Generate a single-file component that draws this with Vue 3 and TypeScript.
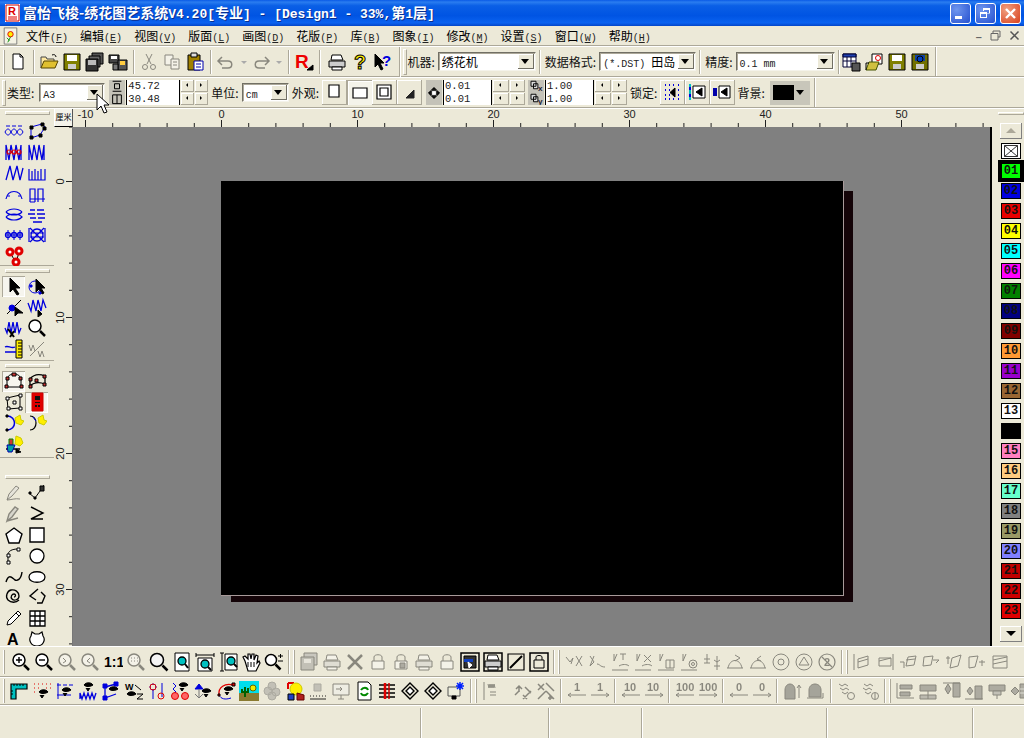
<template>
  <div class="app">
    <div class="titlebar">
      <svg class="logo" width="15" height="18" viewBox="0 0 15 18">
        <path d="M0 0h15v18H0z" fill="#fff" />
        <path d="M1 1h13v16H1z" fill="none" stroke="#c00" />
        <text x="3" y="11" font-size="11" font-weight="bold" fill="#d00" font-family="Liberation Sans">R</text>
        <path d="M3 13h9M3 15h9" stroke="#d00" />
      </svg>
      <span class="title">富怡飞梭-绣花图艺系统<span class="m">V4.20[</span>专业<span class="m">] - [Design1 - 33%,</span>第<span class="m">1</span>层<span class="m">]</span></span>
      <div class="winbtns">
        <div class="winbtn"><i class="min"></i></div>
        <div class="winbtn"><i class="max"></i><i class="max back"></i></div>
        <div class="winbtn close">
          <svg width="13" height="13" viewBox="0 0 13 13"><path d="M2 2l9 9M11 2l-9 9" stroke="#fff" stroke-width="2.4" /></svg>
        </div>
      </div>
    </div>

    <div class="menubar">
      <Ico class="mdi-icon" name="mdi" />
      <span v-for="m in menus" :key="m[0]" class="menu-item">{{ m[0] }}<span class="lat">(<u>{{ m[1] }}</u>)</span></span>
      <div class="mdi-btns">
        <span>&#8211;</span>
        <svg width="11" height="11" viewBox="0 0 11 11"><path d="M3 3V1h7v6H8M1 3.500h7v6.500H1z" fill="none" stroke="#666" /></svg>
        <svg width="11" height="11" viewBox="0 0 11 11"><path d="M1.500 1.500l8 8M9.500 1.500l-8 8" stroke="#555" stroke-width="1.500" /></svg>
      </div>
    </div>

    <div class="toolrow row1">
      <div class="bar">
        <div v-for="(it, i) in parse('= new | open save saveall saveas | !cut !copy paste | !undo ~ !redo ~ | rlogo | _2 print what help')" :key="i" :class="it.cls"><Ico v-if="it.name" :name="it.name" /></div>
        <div class="endline"></div>
        <div class="grip"></div>
        <span class="lbl">机器:</span>
        <div class="combo w98"><span class="combo-text cjk">绣花机</span><b class="arrow"></b></div>
        <div class="sep"></div>
        <span class="lbl">数据格式:</span>
        <div class="combo w97"><span class="combo-text"><span class="lat">(*.DST) </span>田岛</span><b class="arrow"></b></div>
        <div class="sep"></div>
        <span class="lbl">精度:</span>
        <div class="combo w99"><span class="combo-text"><span class="lat">0.1 mm</span></span><b class="arrow"></b></div>
        <div class="sep tight"></div>
        <div v-for="(it, i) in parse('tb1 tb2 floppy floppy2')" :key="'e' + i" :class="it.cls"><Ico v-if="it.name" :name="it.name" /></div>
      </div>
    </div>

    <div class="toolrow row2">
      <div class="bar">
        <div class="grip"></div>
        <span class="lbl">类型:</span>
        <div class="combo w66"><span class="combo-text"><span class="lat">A3</span></span><b class="arrow"></b></div>
        <div class="gray-ico"><Ico name="szH" /><Ico name="szW" /></div>
        <div class="pair w54"><span>45.72</span><span>30.48</span></div>
        <div class="spins"><i v-for="n in spinArrows" :key="n" :class="n"></i></div>
        <span class="lbl">单位:</span>
        <div class="combo w47"><span class="combo-text"><span class="lat">cm</span></span><b class="arrow"></b></div>
        <span class="lbl look">外观:</span>
        <div v-for="b in looks" :key="b" class="bigbtn" :class="{ pressed: b === 'lk2' }"><Ico :name="b" /></div>
        <div class="gray-ico one"><Ico name="move" /></div>
        <div class="pair w50"><span>0.01</span><span>0.01</span></div>
        <div class="spins w34"><i v-for="n in spinArrows" :key="n" :class="n"></i></div>
        <div class="gray-ico qq"><Ico name="qx" /><Ico name="qy" /></div>
        <div class="pair w50"><span>1.00</span><span>1.00</span></div>
        <div class="spins w34"><i v-for="n in spinArrows" :key="n" :class="n"></i></div>
        <span class="lbl">锁定:</span>
        <div v-for="b in locks" :key="b" class="bigbtn"><Ico :name="b" /></div>
        <span class="lbl bg">背景:</span>
        <div class="bgpick"><i></i><b class="arrow"></b></div>
      </div>
    </div>

    <div class="work">
      <div class="leftbar">
        <div class="lgroup g1">
          <div class="hgrip"></div>
          <div class="lgrid">
            <div v-for="(it, i) in parse('l1 l2 l3 l4 l5 l6 l7 l8 l9 l10 l11 l12 l13')" :key="i" :class="it.cls"><Ico :name="it.name" /></div>
          </div>
        </div>
        <div class="lgroup g2">
          <div class="hgrip"></div>
          <div class="lgrid">
            <div v-for="(it, i) in parse('arrow nodepick cutn zzsel zzeye mag rulery !wave')" :key="i" :class="[it.cls, { lit: it.name === 'arrow' }]"><Ico :name="it.name" /></div>
          </div>
        </div>
        <div class="lgroup g3">
          <div class="hgrip"></div>
          <div class="lgrid">
            <div v-for="(it, i) in parse('shape1 shape2 shape3 reddoc cy1 cy2 person')" :key="i" :class="[it.cls, { lit: it.name === 'shape1' || it.name === 'reddoc' }]"><Ico :name="it.name" /></div>
          </div>
        </div>
        <div class="lgroup g4">
          <div class="hgrip"></div>
          <div class="lgrid">
            <div v-for="(it, i) in parse('!pen pen2 !pen3 zz2 penta square arcn circle curve oval spiral poly pencil grid letterA blob')" :key="i" :class="it.cls"><Ico :name="it.name" /></div>
          </div>
        </div>
      </div>

      <div class="center">
        <div class="ruler-row">
          <div class="corner">厘米</div>
          <svg class="hruler" width="917" height="19">
            <path v-for="t in hTicks" :key="t.v" :d="`M${t.x} ${t.major ? 12 : 15}V19`" stroke="#222" />
            <text v-for="t in hLabels" :key="t.v" :x="t.x" y="10" text-anchor="middle" font-size="11" fill="#222" font-family="Liberation Sans">{{ t.v }}</text>
          </svg>
        </div>
        <div class="canvas-row">
          <svg class="vruler" width="19" height="520">
            <path v-for="t in vTicks" :key="t.v" :d="`M${t.major ? 12 : 15} ${t.y}H19`" stroke="#222" />
            <text v-for="t in vLabels" :key="t.v" :transform="`translate(10 ${t.y}) rotate(-90)`" text-anchor="middle" font-size="11" fill="#222" font-family="Liberation Sans">{{ t.v }}</text>
          </svg>
          <div class="canvas">
            <div class="sheet-shadow"></div>
            <div class="sheet"></div>
          </div>
        </div>
      </div>

      <div class="palette">
        <div class="hgrip"></div>
        <div class="scrollbtn"><b class="up"></b></div>
        <div class="swatch none">
          <svg width="14" height="12" viewBox="0 0 14 12"><path d="M.5.500h13v11H.500zM.5.500l13 11M13.500.500l-13 11" fill="none" stroke="#333" /></svg>
        </div>
        <div v-for="s in swatches" :key="s.n" class="swatch" :class="{ on: s.n === '01' }" :style="{ background: s.c }">{{ s.n === '14' ? '' : s.n }}</div>
        <div class="scrollbtn down"><b></b></div>
      </div>
    </div>

    <div class="toolrow bottom1">
      <div v-for="(it, i) in parse('= zin zout !zprev !znext one !zdot zall zpage zw zh hand zpm = !b1 !print !xx !padlock !padlock2 !print !padlock dot1 dot2 dot3 dot4 = !n1 !n2 !n3 !n4 !n5 !n6 !n7 !n8 !n9 !n10 !n11 !n12 = !k1 !k2 !k3 !k4 !k5 !k6 !k7')" :key="i" :class="it.cls"><Ico v-if="it.name" :name="it.name" /></div>
    </div>

    <div class="toolrow bottom2">
      <div v-for="(it, i) in parse('= sq eye1 eye2 eye3 eye4 eye5 pin eye6 eye7 eye8 terrain !blobs bulb !dots !monitor docg bars dia dia spark = !w1 _ !w2 !w3 | !m1 !m2 | !m3 !m4 | !m5 !m6 | !m7 !m8 | !bell1 !bell2 | !hat1 !hat2 = !al1 !al2 !al3 !al4 !al5 !al6')" :key="i" :class="it.cls"><Ico v-if="it.name" :name="it.name" /></div>
    </div>

    <div class="statusbar">
      <div v-for="w in statusWidths" :key="w" class="panel" :style="{ width: w + 'px' }"></div>
    </div>

    <svg class="cursor" width="14" height="22" viewBox="0 0 14 22">
      <path d="M1 1v16l4-4 3 7 3-1-3-7h5z" fill="#fff" stroke="#000" />
    </svg>
  </div>
</template>

<script setup lang="ts">
import { h } from "vue";

type Spec = { d?: string; s?: string; f?: string; w?: number; t?: string; x?: number; y?: number; z?: number };

const B = "#0000dd";
const K = "#000";
const R = "#e00000";
const Y = "#ffee00";
const G = "#777";
const T = "#00c0c0";

const p = (d: string, s: string = K, f?: string, w?: number): Spec => ({ d, s, f, w });
const txt = (t: string, x: number, y: number, z: number, f: string = K, s?: string): Spec => ({ t, x, y, z, f, s });
const c = (x: number, y: number, r: number) =>
  `M${x - r} ${y}a${r} ${r} 0 1 0 ${2 * r} 0a${r} ${r} 0 1 0 ${-2 * r} 0`;
const eye = (x: number, y: number) => p(`M${x} ${y}c2-3 7-3 9 0-3 2-7 2-9 0z`, K, K);
const lens = (x: number, y: number, r: number, f = "#fff") => [
  p(c(x, y, r), K, f, 1.5),
  p(`M${x + r - 1} ${y + r - 1}l5 5`, K, undefined, 2.5),
];
const floppy = (f: string, w = "#fff") => [
  p("M2 2h16v16H2z", K, f),
  p("M5 3h10v6H5z", "none", w),
  p("M6 12h8v5H6z", "none", "#ccc"),
];
const padlock = [p("M4 9h12v8H4z", K, "#fff"), p("M6 9V5c0-3 8-3 8 0v4")];
const prn = [p("M5 3h9l2 5H4z", K, "#fff"), p("M2 9h16v6H2z", K, "#ccc"), p("M5 15h10v3H5z", K, "#fff")];
const needle = (a: string) => [p("M4 2v7M7 2L4 9M2 18h16"), p(a)];

const I: Record<string, Spec[]> = {
  mdi: [p("M3 1h14v18H3z", G, "#f4f2e4"), p(c(10, 8, 3), R, Y), p("M10 11l-3 6M6 12l3 3", "#080")],
  new: [p("M5 2h7l3 3v12H5z", K, "#fff"), p("M12 2v3h3")],
  open: [p("M2 16V5h5l1 2h7v2", "#444", "#ffe9a0"), p("M2 16l3-7h14l-3 7z", "#554400", "#e0c030"), p("M13 3c2-1 4 0 4 2", K)],
  save: floppy("#808000"),
  saveall: [p("M7 1h11v11H7z", K, "#555"), p("M4 4h11v11H4z", K, "#666"), p("M1 7h12v12H1z", K, "#333"), p("M3 8h8v5H3z", "none", "#bbb")],
  saveas: [p("M1 3h10v8H1z", K, "#444"), p("M3 4h6v3H3z", "none", "#fff"), p("M10 8h9v10h-9z", K, "#555"), p("M12 9h5v4h-5z", "none", "#ffcc40"), p("M5 12h5v6H5z", K, "#777")],
  cut: [p("M7 2l5 10M13 2L8 12"), p(c(6, 15, 2.5)), p(c(14, 15, 2.5))],
  copy: [p("M3 3h8v10H3z", K, "#fff"), p("M9 7h8v10H9z", K, "#fff"), p("M11 10h4M11 13h4")],
  paste: [p("M3 3h12v15H3z", K, "#a08000"), p("M6 1h6v4H6z", K, "#ddd"), p("M9 9h9v9H9z", "#0000aa", "#fff"), p("M11 12h5M11 15h5", "#0000aa")],
  undo: [p("M6 5L2 9l4 4M2 9h10c5 0 5 7 0 7H6", K, undefined, 1.5)],
  redo: [p("M14 5l4 4-4 4M18 9H8c-5 0-5 7 0 7h6", K, undefined, 1.5)],
  rlogo: [txt("R", 1, 16, 19, "#ee0000"), p("M13 18h6v-5z", K, K)],
  print: prn,
  what: [txt("?", 4, 17, 20, Y, K)],
  help: [p("M2 2v13l3-3 3 6 2-1-3-6h4z", K, K), txt("?", 9, 14, 15, B)],
  tb1: [p("M2 2h13v13H2z", "#003", "#fff"), p("M2 2h13v3H2z", "#003", "#2040b0"), p("M6 5v10M10 5v10M2 9h13", "#003"), p("M11 11h8v8h-8z", K, "#555")],
  tb2: [p("M8 2h10v10H8z", K, "#fff"), p(c(14, 6, 2.5), R, "#fff"), p("M2 18l3-8h10l-3 8z", "#450", "#d0c040"), p("M2 18v-7h3", K)],
  floppy: floppy("#808000"),
  floppy2: [...floppy("#707000", "#1040a0"), p(c(10, 7, 3), K, "#0040c0")],
  szH: [p("M3 2h14M3 18h14", K, undefined, 1.6), p("M6 6h8v8H6z", K, undefined, 1.6)],
  szW: [p("M3 3h14v14H3zM10 3v14", K, undefined, 1.6)],
  lk1: [p("M5 3h10v12H5z", K, "#fff", 1.2)],
  lk2: [p("M3 5h14v10H3z", K, "#fff", 1.2)],
  lk3: [p("M3 3h14v14H3z", K, "#fff", 1.2), p("M6 6h8v8H6z", K, "none", 1.2)],
  lk4: [p("M15 8v8H7z", "#222", "#222")],
  move: [p("M10 3l3 3H7zM10 17l3-3H7zM3 10l3-3v6zM17 10l-3-3v6z", K, K), p("M7 7h6v6H7z", K, "#fff")],
  qx: [p("M2 2h8v8H2zM6 6h7v8H6z", K, "#ddd", 1.5), txt("x", 13, 17, 13, "#223")],
  qy: [p("M2 2h8v8H2zM6 6h7v8H6z", K, "#ddd", 1.5), txt("y", 13, 17, 13, "#223")],
  lock1: [p("M3 3h1M7 3h1M11 3h1M16 3h1M3 8h1M7 8h1M16 8h1M3 13h1M7 13h1M16 13h1M3 17h1M7 17h1M11 17h1M16 17h1", B, undefined, 2), p("M13 6v9l-5-4.500z", K, K)],
  lock2: [p("M3 2v16", T, undefined, 2), p("M3 5v3M3 12v3", B, undefined, 2), p("M6 4h12v12H6z", K, "#fff"), p("M15 6v8l-6-4z", K, K)],
  lock3: [p("M3 6v8", "#0000aa", undefined, 4), p("M7 4h11v12H7z", K, "#fff"), p("M15 6v8l-6-4z", K, K)],

  l1: [p("M2 5h4M8 5h4M14 5h4", B), p("M1 11c2-4 4-4 6 0s4 4 6 0 4-4 6 0M1 11c2 4 4 4 6 0s4-4 6 0 4 4 6 0", B)],
  l2: [p("M4 6l11-3 3 3-5 8-9 3z", B, undefined, 1), p("M3 5h3v3H3zM14 2h3v3h-3zM16 6h3v3h-3zM12 13h3v3h-3zM3 15h3v3H3z", K, K)],
  l3: [p("M2 18V3l3 15 2-15 3 15 2-15 3 15 2-15v15", B, undefined, 1.3), p(c(5, 10, 2) + c(10, 10, 2) + c(15, 10, 2), R, undefined, 1.2)],
  l4: [p("M2 18V3l3 15 2-15 3 15 2-15 3 15 2-15v15", B, undefined, 1.3)],
  l5: [p("M2 17L6 3l3 14 4-14 3 14 3-12", B, undefined, 1.3)],
  l6: [p("M2 6v11h16V6M5 8v9M8 6v11M11 8v9M14 6v11", B, undefined, 1.2)],
  l7: [p("M2 15c2-10 14-10 16 0", B, undefined, 1.2), p("M3 12h3M14 12h3", B)],
  l8: [p("M3 18V5h5v13M3 18h5M11 18V5h5v13M3 15h15", B, undefined, 1.2)],
  l9: [p("M2 7c4-4 12-4 16 0M2 12c4-4 12-4 16 0 -4 4-12 4-16 0M2 7c4 4 12 4 16 0", B, undefined, 1.2)],
  l10: [p("M3 5h5M10 5h7M1 9h7M10 9h8M3 13h6M11 13h7M6 17h9", B, undefined, 1.3)],
  l11: [p(c(4, 10, 2.5) + c(10, 10, 2.5) + c(16, 10, 2.5), B, undefined, 1.3), p("M1 10h18M4 5v10M10 5v10M16 5v10", B)],
  l12: [p(c(10, 10, 6), B, undefined, 1.3), p("M3 3l14 14M17 3L3 17M3 8h14M3 12h14M2 3v14M18 3v14", B, undefined, 1.2)],
  l13: [p("M7 8l5 9M15 6l-3 11", K), p(c(6, 6, 3) + c(15, 5, 3) + c(12, 16, 3), R, "#fff", 3)],

  arrow: [p("M6 2v14l3-3 4 6 2-1-4-6h5z", K, K)],
  nodepick: [p(c(8, 11, 6), B, undefined, 1), p("M9 3v13l3-3 3 5 2-1-3-5h4z", K, K), p("M3 9h2v2H3zM12 16h2v2h-2z", B, B)],
  cutn: [p("M3 17L17 3", K), p(c(8, 11, 3), B, B), p("M11 10v9l3-3h5z", K, K)],
  zzsel: [p("M1 6l3 8 2-11 3 11 2-11 3 11 2-11 3 8", B, undefined, 1.3), p("M11 13v7l4-3z", K, K)],
  zzeye: [p("M1 10l2 5 2-11 2 11 2-11 2 11 2-11 2 11 2-5", B, undefined, 1.3), p("M4 11l6 8", K, undefined, 2), p("M10 13l-4 6", K, undefined, 2)],
  mag: lens(8, 8, 6),
  rulery: [p("M12 1h6v18h-6z", K, Y), p("M14 4h4M14 7h4M14 10h4M14 13h4M14 16h4"), p("M1 8c3-2 6 2 10 0M1 13h11", B, undefined, 1.3)],
  wave: [p("M2 6l2 6 2-6 2 6M11 12l2 6 2-6 2 6M3 17L17 3", K)],
  shape1: [p("M3 16V9c0-8 14-8 14 0v7z", K), p("M1 14h3v3H1zM16 14h3v3h-3zM8 2h4v3H8zM2 6h3v3H2zM15 6h3v3h-3z", K, "#c33")],
  shape2: [p("M3 8c4-5 10-5 15-3M3 15c4-4 10-4 15-2M3 8v7M18 5v8", K, undefined, 1.3), p("M2 7h3v3H2zM16 4h3v3h-3zM8 8h3v3H8zM2 14h3v3H2zM16 12h3v3h-3z", K, "#c33")],
  shape3: [p("M3 6l13-3v13l-12 1z", K), p("M2 5h3v3H2zM15 2h3v3h-3zM15 15h3v3h-3zM3 15h3v3H3zM9 9h3v3H9z", K, "#fff")],
  reddoc: [p("M5 1h11v18H5z", "#c00", "#e00000"), p("M8 4h5v4H8zM8 10h5v1H8zM8 13h2v2H8zM11 13h2v2h-2z", "none", "#111")],
  cy1: [p("M3 3c10 0 10 14 0 14", B, undefined, 1.5), p("M11 5l5-3 1 5 3 1-3 4-5-2z", "#cc0", Y), p("M2 2h2v2H2zM2 16h2v2H2z", K, K)],
  cy2: [p("M3 3c8 0 8 14 0 14", K, undefined, 1.2), p("M11 5l5-3 1 5 3 1-3 4-5-2z", "#cc0", Y), p("M6 4l3 4", B)],
  person: [p("M12 2l5 2 2 5-3 3-5-2z", "#cc0", Y), p("M2 15h14", K, undefined, 1.5), p("M5 5h4v6H5z", "#080", "#c33"), p("M3 11h8l-3 7H4z", "#00a", "#00a0a0"), p("M12 15l5 3-5 1z", K, K)],

  pen: [p("M3 17l2-6 7-8 3 2-7 8zM3 17c4 0 8-2 13-1", K, "#ddd")],
  pen2: [p("M2 10l6 5 5-7M13 8l4-6", K), p("M13 3h4v5h-4z", K, "#333"), p("M2 9h2v2H2zM7 14h2v2H7z", K, K)],
  pen3: [p("M3 17l2-7 6-7 3 2-6 8zM3 17l11-3", K, "#bbb", 1.4)],
  zz2: [p("M4 3l12 6L4 15h12", K, undefined, 1.4)],
  penta: [p("M10 3l8 6-3 9H5L2 9z", K, "#fff", 1.4)],
  square: [p("M3 3h14v14H3z", K, "#fff", 1.4)],
  arcn: [p("M4 16V9c0-4 4-6 10-6", K), p("M3 15h3v3H3zM3 8h3v3H3zM13 2h3v3h-3z", K, "#fff")],
  circle: [p(c(10, 10, 7), K, "#fff", 1.3)],
  curve: [p("M2 15c3-10 7-3 9-2s6 0 7-8", K, undefined, 1.4)],
  oval: [p("M2 10c0-7 16-7 16 0s-16 7-16 0z", K, "#fff", 1.3)],
  spiral: [p("M10 10c2 0 2-3 0-3s-4 3-2 5 7 1 7-3-4-7-8-6-6 7-3 10 8 3 11 0", K, undefined, 1.3)],
  poly: [p("M11 2L3 9l6 4M14 5l4 4-3 7h-5", K, undefined, 1.4)],
  pencil: [p("M3 17l1-4L14 3l3 3L7 16zM12 5l3 3", K, "#fff")],
  grid: [p("M3 3h15v15H3zM3 8h15M3 13h15M8 3v15M13 3v15", K, "#fff", 1.3)],
  letterA: [txt("A", 3, 16, 16, K)],
  blob: [p("M5 3l3 2h4l3-2 1 4c3 4 0 10-6 10S1 11 4 7z", K, "#fff", 1.2)],

  zin: [...lens(8, 8, 6), p("M5 8h6M8 5v6", K, undefined, 1.4)],
  zout: [...lens(8, 8, 6), p("M5 8h6", K, undefined, 1.4)],
  zprev: [...lens(8, 8, 6), p("M6 6l3 3-3 2")],
  znext: [...lens(8, 8, 6), p("M10 6L7 9l3 2")],
  one: [txt("1:1", 1, 15, 14, K)],
  zdot: [...lens(8, 8, 6), p("M5 6h1M8 6h1M11 6h1M5 9h1M8 9h1M11 9h1")],
  zall: lens(8, 8, 6.500, "#f4f4f4"),
  zpage: [p("M3 1h14v18H3z", K, "#fff"), p(c(10, 9, 4), K, T, 1.3), p("M13 12l3 4", K, undefined, 2)],
  zw: [p("M1 3h18M1 1v4M19 1v4", K), p("M3 6h14v13H3z", K, "#fff"), p(c(10, 12, 4), K, T, 1.3), p("M13 15l3 3", K, undefined, 2)],
  zh: [p("M2 1h4M2 19h4M4 1v18", K), p("M7 2h12v16H7z", K, "#fff"), p(c(13, 9, 4), K, T, 1.3), p("M16 12l3 3", K, undefined, 2)],
  hand: [p("M4 9L2 5l2-1 3 3 0-5 2 0 1 5 1-5h2l0 6 2-5 2 1-1 7 2-2 1 2-4 8H7z", K, "#fff", 1.2), p("M7 10v5M10 10v5M13 10v5")],
  zpm: [...lens(7, 8, 5.500), p("M14 4h5M16.500 2v4M14 9h5")],
  b1: [p("M5 1h13v12H5z", K, "#999"), p("M2 5h13v13H2z", K, "#888"), p("M5 7h7v4H5z", "none", "#ddd")],
  xx: [p("M3 3l14 14M17 3L3 17", K, undefined, 2.5)],
  padlock,
  padlock2: [...padlock, p("M9 11h5v5H9z", K, "#555")],
  dot1: [p("M1 1h18v18H1z", K, undefined, 1.5), p("M4 4h12v12H4z", K, "#333"), p("M4 7h9v3H4z", "none", "#1040c0"), p("M8 10l4 3-3 3z", "#fff", "#fff")],
  dot2: [p("M1 1h18v18H1z", K, undefined, 1.5), ...prn],
  dot3: [p("M2 2h16v16H2z", K, undefined, 1.2), p("M4 16L16 4", K, undefined, 2)],
  dot4: [p("M1 1h18v18H1z", K, undefined, 1.5), p("M5 8h10v8H5zM7 8V5c0-2 6-2 6 0v3", K)],
  n1: [p("M2 5l4 5 3-4-2 6M12 4l6 10M18 4l-6 10", K)],
  n2: [p("M3 4l4 6-4 4M7 4L3 14M10 12c3 0 3 3 8 3", K)],
  n3: needle("M10 2h6M13 2v6M9 14c3-2 8-2 10 0"),
  n4: needle("M11 3l7 7M18 3l-7 7M9 14c3-2 8-2 10 0"),
  n5: needle("M10 8h8v8h-8zM14 8v8"),
  n6: needle(c(14, 12, 4) + c(14, 12, 1.5)),
  n7: [p("M5 2v5M2 7h6M5 7v4M2 11h6M12 8l3 2 3-2M15 4v14M12 14h6", K)],
  n8: [p("M3 16c2-10 12-10 14 0M2 16h16M10 3l5 3-5 3", K)],
  n9: [p("M3 16c2-10 12-10 14 0M2 16h16M13 4l-4 3 4 2", K)],
  n10: [p(c(10, 10, 8) + c(10, 10, 3), K)],
  n11: [p(c(10, 10, 8) + "M10 5l5 8H5z", K)],
  n12: [p(c(10, 10, 8) + "M5 5l10 10", K, undefined, 1.2), txt("2", 7, 14, 11, K)],
  k1: [p("M2 2v16M6 7l10-3v9l-10 3zM6 10l10-3", K)],
  k2: [p("M4 6h12v8H4zM4 9l12-3M18 2v16", K)],
  k3: [p("M2 10h4v6M10 5l8-1-2 9-8 1zM8 8l9-1", K)],
  k4: [p("M3 5l9-1-2 9-8 1zM12 8h6l-3 3", K)],
  k5: [p("M2 6h4M4 4v8M8 6l9-3-3 11-8 2z", K)],
  k6: [p("M2 5l9-1-3 11-6 1zM12 10h6M15 8v6", K)],
  k7: [p("M3 4h14v12H3zM3 8l14-3M3 12l14-3", K)],

  sq: [p("M2 3h16v5H7v10H2z", K, T, 1.2), p("M5 3v2M8 3v2M11 3v2M14 3v2M2 10h2M2 13h2", K)],
  eye1: [p("M2 3h1M6 3h1M10 3h1M14 3h1M18 3h1M2 7h1M6 7h1M14 7h1M18 7h1M2 11h1", R), eye(7, 11), p("M8 14l2 3 2-3", K, K)],
  eye2: [p("M2 4h4M8 4h4M14 4h4M2 14h14M3 2v16", B), eye(7, 9), p("M8 12l2 3 2-3", K, K)],
  eye3: [eye(6, 4), p("M8 7l2 3 2-3", K, K), p("M2 18V12l2 6 2-6 2 6 2-6 2 6 2-6 2 6 2-6", B, undefined, 1.3)],
  eye4: [p("M4 6L15 3M4 17l11-4M4 6v11", B, undefined, 1.3), p("M2 3h4v4H2zM13 1h4v4h-4zM2 15h4v4H2z", B, B), eye(8, 8)],
  eye5: [txt("W", 1, 9, 9, K), eye(3, 13), p("M11 4l6 5M13 13h6l-6 5h6", K)],
  pin: [p(c(6, 6, 3) + "M6 9v9M15 2v14", B), p(c(14, 15, 3), R), p(c(6, 6, 3), R)],
  eye6: [p("M3 2l3 3-3 3 3 3-3 3 3 4", B), p(c(5, 15, 3.5), R, "#f66"), p(c(15, 15, 3.5), R, "#f66"), eye(9, 4), p("M10 7l2 3 2-3", K, K)],
  eye7: [p("M6 3l4 5H2z", B, B), p("M6 8v8M2 13l4 4 4-4", G), eye(9, 10), p("M11 13l2 3 2-3", K, K)],
  eye8: [p("M3 14C2 6 9 2 17 4", R, undefined, 1.3), p("M3 14c2 4 6 5 12 3", B), p("M16 2h3v3h-3zM2 13h2v2H2z", K, R), eye(8, 8), p("M9 11l2 3 2-3", K, K)],
  terrain: [p("M0 0h20v12H0z", "none", "#00ddee"), p("M0 12h20v8H0z", "none", "#8a7a30"), p("M6 16V6M3 8v3h6V7", "#006000", undefined, 2), p(c(14, 7, 3), "#660", "#ee0")],
  blobs: [p(c(10, 5, 4) + c(6, 10, 4) + c(14, 11, 4) + c(10, 15, 4), "#555", "#888")],
  bulb: [p("M3 2v6M3 2h6", R, undefined, 2), p(c(11, 8, 6), "#cc0", Y), p("M12 12l7 2v5h-7z", "#600", "#b02020"), p("M3 13h6v6H3z", "#000", "#2040c0")],
  dots: [p("M6 3h7v7H6z", "#555", "#888"), p("M2 15h1M5 15h1M8 15h1M11 15h1M14 15h1M17 15h1M2 18h16", K, undefined, 2)],
  monitor: [p("M2 3h16v11H2zM7 18h6M10 14v4", K, "#f4f2e4"), p("M5 8h6l-2-2M11 8l-2 2", K)],
  docg: [p("M4 1h10l3 3v15H4z", K, "#fff"), p("M7 9c2-3 6-3 7 0M14 12c-2 3-6 3-7 0", "#008800", undefined, 2)],
  bars: [p("M2 4h16M2 8h16M2 12h16M2 16h16", K, undefined, 1.5), p("M8 2v16", R, undefined, 2.5), p("M12 2v16", "#c00", undefined, 1.5)],
  dia: [p("M10 2l8 8-8 8-8-8z", K, undefined, 1.4), p("M10 6l4 4-4 4-4-4z", K, "#fff", 1.4)],
  spark: [p("M2 6h12v9H2z", "#555", "#eeeedd"), p("M6 15h4v3H6z", K, K), p("M14 1v8M10 5h8M11 2l6 6M17 2l-6 6", "#0020ff", undefined, 1.5)],
  w1: [p("M3 1v18M7 3l1 4 1-4 1 4 1-4 1 4 1-4 1 4M9 11h6M9 14h6", K)],
  w2: [p("M2 14l4-4M6 5v6M3 8l3-3 3 3M10 18l8-8M12 6l6 6M10 14l4 4", K, undefined, 1.5)],
  w3: [p("M2 3l6 6M8 3L2 9M10 2l8 8M10 10l8 8M2 18l8-8M14 14v5M12 17h5", K, undefined, 1.5)],
  m1: [txt("1", 7, 10, 11, K), p("M1 14h18M1 14l3-2M1 14l3 2", K)],
  m2: [txt("1", 7, 10, 11, K), p("M1 14h18M19 14l-3-2M19 14l-3 2", K)],
  m3: [txt("10", 3, 10, 11, K), p("M1 14h18M1 14l3-2M1 14l3 2", K)],
  m4: [txt("10", 3, 10, 11, K), p("M1 14h18M19 14l-3-2M19 14l-3 2", K)],
  m5: [txt("100", 1, 10, 11, K), p("M1 14h18M1 14l3-2M1 14l3 2", K)],
  m6: [txt("100", 1, 10, 11, K), p("M1 14h18M19 14l-3-2M19 14l-3 2", K)],
  m7: [txt("0", 7, 10, 11, K), p("M1 14h18M1 14l3-2M1 14l3 2", K)],
  m8: [txt("0", 7, 10, 11, K), p("M1 14h18M19 14l-3-2M19 14l-3 2", K)],
  bell1: [p("M2 18V9c0-8 10-8 10 0v9z", K, "#444"), p("M16 5v12M14 7l2-3 2 3", K)],
  bell2: [p("M3 16V9c0-8 12-8 12 0v7z", K, "#444"), p("M1 17h16M17 12v5", K)],
  hat1: [p("M2 3l3 2 3-2 3 2M3 7l3 2 3-2 3 2M5 11l3 2 3-2", K), p(c(14, 15, 3.5), K)],
  hat2: [p("M4 3l3 2 3-2 3 2M3 7l3 2 3-2 3 2M5 11l3 2 3-2", K), p(c(15, 15, 3.5), K), p("M15 12v6", K)],
  al1: [p("M2 2v15h17", K), p("M5 4h12v4H5zM5 11h10v4H5z", K, "#555")],
  al2: [p("M2 4h16v6H2z", K, "#555"), p("M2 14h16v4H2zM10 10v8", K, "#777")],
  al3: [p("M12 2h7v14h-7z", K, "#555"), p("M2 2h17M7 3l3 5-3 5-3-5z", K, "#555")],
  al4: [p("M11 5h7v13h-7z", K, "#555"), p("M6 6l3 4-3 4-3-4z", K, "#555"), p("M1 18h18", K)],
  al5: [p("M2 4h16v6H2z", K, "#555"), p("M6 10h8v4H6zM10 14v4", K, "#888")],
  al6: [p("M1 10l4-4 4 4-4 4z", K, "#555"), p("M10 3h8v14h-8z", K, "#555"), p("M10 8h8M10 12h8", "#ccc")],
};

// icons are picked by name from the table above
const Ico = (props: { name: string }) =>
  h(
    "svg",
    { width: 20, height: 20, viewBox: "0 0 20 20" },
    (I[props.name] || []).map((a) =>
      a.t
        ? h("text", { x: a.x, y: a.y, "font-size": a.z, fill: a.f, stroke: a.s, "font-weight": "bold", "font-family": "Liberation Sans" }, a.t)
        : h("path", { d: a.d, stroke: a.s, fill: a.f || "none", "stroke-width": a.w || 1 }),
    ),
  );
Ico.props = ["name"];

// '|' separator, '=' toolbar break with grip, '~' small dropdown arrow, '_' spacer, '!' disabled icon
function parse(list: string) {
  return list.split(" ").map((tok) => {
    if (tok === "|") return { cls: "sep", name: "" };
    if (tok === "=") return { cls: "brk", name: "" };
    if (tok === "~") return { cls: "dd", name: "" };
    if (tok === "_") return { cls: "spacer", name: "" };
    if (tok === "_2") return { cls: "spacer small", name: "" };
    const dis = tok.startsWith("!");
    return { cls: dis ? "slot dis" : "slot", name: dis ? tok.slice(1) : tok };
  });
}

const menus = [
  ["文件", "F"], ["编辑", "E"], ["视图", "V"], ["版面", "L"], ["画图", "D"], ["花版", "P"],
  ["库", "B"], ["图象", "I"], ["修改", "M"], ["设置", "S"], ["窗口", "W"], ["帮助", "H"],
];

const spinArrows = ["l a", "r b", "l c", "r d"];
const looks = ["lk1", "lk2", "lk3", "lk4"];
const locks = ["lock1", "lock2", "lock3"];

const colors = [
  "#00ff00", "#0000e0", "#e80000", "#ffff00", "#00ffff", "#ff00ff", "#008000", "#000080",
  "#800000", "#ff9933", "#9900cc", "#996633", "#ffffff", "#000000", "#ff80c0", "#ffcc80",
  "#66ffcc", "#808080", "#999966", "#8080ff", "#c00000", "#cc0000", "#e00000",
];
const swatches = colors.map((col, i) => ({ n: String(i + 1).padStart(2, "0"), c: col }));

const scale = 13.6;
const hTicks: { v: number; x: number; major: boolean }[] = [];
for (let v = -10; v <= 56; v += 2) hTicks.push({ v, x: 148.5 + v * scale, major: v % 10 === 0 });
const hLabels = hTicks.filter((t) => t.major);
const vTicks: { v: number; y: number; major: boolean }[] = [];
for (let v = -4; v <= 34; v += 2) vTicks.push({ v, y: 54.5 + v * scale, major: v % 10 === 0 });
const vLabels = vTicks.filter((t) => t.major);

const statusWidths = [421, 128, 93, 185, 146, 51];
</script>

<style>
html,
body {
  margin: 0;
  background: #ece9d8;
}
</style>

<style scoped>
.app {
  position: relative;
  width: 1024px;
  height: 738px;
  overflow: hidden;
  display: flex;
  flex-direction: column;
  background: #ece9d8;
  color: #000;
  font: 12px "Noto Sans CJK SC", sans-serif;
}
.m {
  font-family: "Liberation Mono", monospace;
  font-size: 13px;
}
svg {
  display: block;
  flex: none;
}

/* title bar */
.titlebar {
  flex: none;
  height: 26px;
  display: flex;
  align-items: center;
  padding-left: 5px;
  background: linear-gradient(#0a5ae6 0%, #2a7df0 8%, #0a5fe6 22%, #0054e3 60%, #0a62f0 88%, #0345c8 100%);
  box-sizing: border-box;
}
.title {
  margin-left: 3px;
  color: #fff;
  font-size: 14px;
  font-weight: 700;
  line-height: 26px;
  white-space: pre;
  text-shadow: 1px 1px 0 #0a2f90;
}
.winbtns {
  margin-left: auto;
  margin-right: 3px;
  display: flex;
  gap: 4px;
}
.winbtn {
  position: relative;
  width: 19px;
  height: 19px;
  border: 1px solid #fff;
  border-radius: 3px;
  background: radial-gradient(circle at 30% 30%, #6f96ee, #2450d0);
  box-sizing: content-box;
  display: flex;
  align-items: center;
  justify-content: center;
}
.winbtn.close {
  background: radial-gradient(circle at 30% 30%, #f0a080, #d8401c);
}
.min {
  position: absolute;
  left: 4px;
  bottom: 4px;
  width: 7px;
  height: 3px;
  background: #fff;
}
.max {
  position: absolute;
  left: 4px;
  top: 8px;
  width: 7px;
  height: 6px;
  border: 1px solid #fff;
  border-top-width: 2px;
  box-sizing: border-box;
}
.max.back {
  left: 7px;
  top: 4px;
  clip-path: polygon(0 0, 100% 0, 100% 100%, 55% 100%, 55% 60%, 0 60%);
}

/* menu */
.menubar {
  flex: none;
  height: 20px;
  display: flex;
  align-items: center;
  padding-left: 1px;
  border-bottom: 1px solid #aca899;
  box-sizing: border-box;
  box-shadow: 0 1px 0 #fff;
  position: relative;
}
.mdi-icon {
  width: 19px;
  height: 18px;
}
.menu-item {
  padding: 0 6px;
  white-space: nowrap;
  line-height: 19px;
}
.lat {
  font: 10px "Liberation Mono", monospace;
  color: #222;
}
.mdi-btns {
  margin-left: auto;
  display: flex;
  align-items: center;
  gap: 8px;
  padding-right: 4px;
  color: #666;
  font-weight: 700;
}

/* tool rows */
.toolrow {
  flex: none;
  position: relative;
}
.row1,
.row2 {
  height: 31px;
  border-bottom: 1px solid #aca899;
  box-shadow: 0 1px 0 #fff;
  box-sizing: border-box;
  padding-top: 1px;
}
.bar {
  display: flex;
  align-items: center;
  height: 29px;
  width: fit-content;
  padding-right: 4px;
  padding-left: 2px;
  border-right: 1px solid #aca899;
  box-shadow: 1px 0 0 #fff;
}
.row1 .bar {
  padding-left: 0;
}
.row1 .bar > .brk:first-child {
  width: 6.500px;
  background: linear-gradient(#fff, #fff) 3px 0 / 1px 100% no-repeat, linear-gradient(#aca899, #aca899) 4px 0 / 1px 100% no-repeat;
}
.grip {
  flex: none;
  width: 2px;
  height: 24px;
  border-left: 1px solid #fff;
  border-top: 1px solid #fff;
  border-right: 1px solid #aca899;
  border-bottom: 1px solid #aca899;
}
.sep {
  flex: none;
  width: 8px;
  height: 24px;
  background: linear-gradient(#aca899, #aca899) 3px 0 / 1px 100% no-repeat, linear-gradient(#fff, #fff) 4px 0 / 1px 100% no-repeat;
}
.sep.tight {
  margin-right: -3.500px;
}
.brk {
  flex: none;
  width: 12px;
  height: 24px;
  background: linear-gradient(#aca899, #aca899) 3px 0 / 1px 100% no-repeat, linear-gradient(#fff, #fff) 4px 0 / 1px 100% no-repeat,
    linear-gradient(#fff, #fff) 8px 0 / 1px 100% no-repeat, linear-gradient(#aca899, #aca899) 9px 0 / 1px 100% no-repeat;
}
.slot {
  flex: none;
  width: 23px;
  height: 22px;
  display: flex;
  align-items: center;
  justify-content: center;
}
.dis svg {
  filter: grayscale(1) opacity(0.42);
}
.dd {
  flex: none;
  width: 12px;
  height: 22px;
  position: relative;
}
.dd::after {
  content: "";
  position: absolute;
  left: 3px;
  top: 10px;
  border: 3px solid transparent;
  border-top-color: #aaa;
}
.spacer {
  flex: none;
  width: 9px;
}
.spacer.small {
  width: 2px;
}
.endline {
  flex: none;
  width: 1px;
  height: 30px;
  margin: 0 3px 0 4px;
  background: #aca899;
  box-shadow: 1px 0 0 #fff;
}
.lbl {
  flex: none;
  margin: 0 3px 0 1px;
  white-space: nowrap;
  color: #111;
}
.combo {
  flex: none;
  height: 19px;
  box-sizing: border-box;
  display: flex;
  align-items: center;
  background: #fff;
  border: 1px solid;
  border-color: #716f64 #f4f3ea #f4f3ea #716f64;
  box-shadow: inset 1px 1px 0 #aca899;
  padding: 1px;
}
.combo-text {
  flex: 1;
  padding-left: 2px;
  white-space: nowrap;
  overflow: hidden;
  line-height: 16px;
}
.arrow {
  flex: none;
  width: 16px;
  height: 15px;
  background: #ece9d8;
  border-right: 1px solid #716f64;
  border-bottom: 1px solid #716f64;
  box-sizing: border-box;
  box-shadow: inset 1px 1px 0 #fff;
  position: relative;
}
.arrow::after {
  content: "";
  position: absolute;
  left: 3px;
  top: 5px;
  border: 4px solid transparent;
  border-top: 5px solid #000;
  border-bottom: 0;
}
.w98 {
  width: 98px;
}
.w97 {
  width: 97px;
}
.w99 {
  width: 99px;
}
.w66 {
  width: 66px;
  margin-left: 2px;
}
.w47 {
  width: 47px;
}
.lbl.look {
  margin: 0 3px 0 3px;
}
.gray-ico {
  flex: none;
  width: 16px;
  height: 25px;
  margin-left: 4px;
  background: #c4c2b8;
  overflow: hidden;
}
.gray-ico svg {
  width: 16px;
  height: 12.500px;
}
.gray-ico.one {
  display: flex;
  align-items: center;
  margin-left: 4px;
}
.gray-ico.one svg {
  height: 16px;
}
.gray-ico.qq {
  margin-left: 1px;
}
.pair {
  flex: none;
  height: 25px;
  display: flex;
  flex-direction: column;
  justify-content: space-around;
  box-sizing: border-box;
  background: #fff;
  border-left: 1px solid #000;
  border-right: 1px solid #000;
  margin-left: 1px;
  padding-left: 1px;
  font: 10.500px/12px "Liberation Mono", monospace;
  color: #222;
}
.w54 {
  width: 54px;
}
.w50 {
  width: 49px;
}
.spins {
  flex: none;
  width: 27px;
  height: 25px;
  margin: 0 2px 0 1px;
  display: grid;
  grid-template-columns: 1fr 1fr;
  grid-template-rows: 1fr 1fr;
  gap: 1px;
}
.spins.w34 {
  width: 32px;
}
.spins i {
  position: relative;
  border-right: 1px solid #aca899;
  border-bottom: 1px solid #aca899;
  box-shadow: inset 1px 1px 0 #fff;
}
.spins i::after {
  content: "";
  position: absolute;
  left: 50%;
  top: 3px;
  margin-left: -1px;
  border: 2px solid transparent;
}
.spins i.l::after {
  border-right-color: #000;
  margin-left: -3px;
}
.spins i.r::after {
  border-left-color: #000;
}
.bigbtn {
  flex: none;
  width: 25px;
  height: 25px;
  display: flex;
  align-items: center;
  justify-content: center;
  box-sizing: border-box;
  border-right: 1px solid #aca899;
  border-bottom: 1px solid #aca899;
  box-shadow: inset 1px 1px 0 #fff;
}
.bigbtn.pressed {
  background: #f4f3ea;
  border: 0;
  border-top: 1px solid #aca899;
  border-left: 1px solid #aca899;
}
.lbl.bg {
  margin-left: 2px;
}
.bgpick {
  flex: none;
  width: 40px;
  height: 24px;
  margin-left: 2px;
  display: flex;
  align-items: center;
  padding-left: 3px;
  box-sizing: border-box;
  background: #c8c6ba;
}
.bgpick i {
  width: 21px;
  height: 15px;
  background: #000;
}
.bgpick .arrow {
  width: 14px;
  background: transparent;
  border: 0;
  box-shadow: none;
}
.bgpick .arrow::after {
  left: 2px;
}

/* work area */
.work {
  flex: 1;
  min-height: 0;
  display: flex;
}
.leftbar {
  flex: none;
  width: 54px;
  box-sizing: border-box;
  display: flex;
  flex-direction: column;
}
.lgroup {
  flex: none;
  box-sizing: border-box;
  padding: 3px 1px 0 2px;
}
.g1 {
  height: 158px;
  border-bottom: 1px solid #aca899;
}
.g2 {
  height: 95px;
  border-bottom: 1px solid #aca899;
}
.g3 {
  height: 97px;
  border-bottom: 1px solid #aca899;
}
.g4 {
  margin-top: 14px;
}
.hgrip {
  height: 2px;
  margin: 0 3px 3px;
  border-top: 1px solid #fff;
  border-bottom: 1px solid #aca899;
  border-left: 1px solid #fff;
  border-right: 1px solid #aca899;
}
.lgrid {
  display: grid;
  grid-template-columns: 23px 23px;
  grid-auto-rows: 20.800px;
  padding-top: 1px;
}
.g1 .lgrid {
  padding-top: 3px;
}
.g2 .lgrid,
.g3 .lgrid {
  padding-top: 0;
}
.lgrid .slot {
  height: 20.800px;
}
.lit {
  background: #f6f5ee;
  box-shadow: inset 1px 1px 0 #aca899, inset -1px -1px 0 #fff;
}
.center {
  flex: 1;
  min-width: 0;
  display: flex;
  flex-direction: column;
}
.ruler-row {
  flex: none;
  height: 19px;
  display: flex;
}
.corner {
  flex: none;
  width: 19px;
  box-sizing: border-box;
  background: #f4f3ea;
  border-left: 1px solid #fff;
  border-right: 1px solid #555;
  border-bottom: 1px solid #000;
  font-size: 8px;
  line-height: 18px;
  white-space: nowrap;
  text-align: center;
}
.hruler {
  border-bottom: 1px solid #777;
  box-sizing: content-box;
  height: 19px;
  margin-bottom: -1px;
}
.canvas-row {
  flex: 1;
  min-height: 0;
  display: flex;
}
.vruler {
  width: 19px;
  border-right: 1px solid #777;
  box-sizing: border-box;
}
.canvas {
  position: relative;
  flex: 1;
  background: #808080;
  border-right: 2px solid #000;
  overflow: hidden;
}
.sheet {
  position: absolute;
  left: 148px;
  top: 54px;
  width: 622px;
  height: 414px;
  background: #000;
  border-right: 1px solid #a89a9a;
  border-bottom: 1px solid #a89a9a;
}
.sheet-shadow {
  position: absolute;
  left: 158px;
  top: 64px;
  width: 622px;
  height: 411px;
  background: #140408;
}

/* colour palette */
.palette {
  flex: none;
  width: 32px;
  box-sizing: border-box;
  padding: 4px 0 0 6px;
  display: flex;
  flex-direction: column;
  align-items: center;
  position: relative;
}
.palette .hgrip {
  align-self: stretch;
  margin: 0 0 3px;
}
.scrollbtn {
  flex: none;
  width: 21px;
  height: 15px;
  margin: 5px 0 4px;
  position: relative;
  background: #ece9d8;
  border-right: 1px solid #808080;
  border-bottom: 1px solid #808080;
  box-shadow: inset 1px 1px 0 #fff;
}
.scrollbtn b {
  position: absolute;
  left: 6px;
  top: 5px;
  border: 5px solid transparent;
  border-top: 5px solid #000;
  border-bottom: 0;
}
.scrollbtn b.up {
  border-top: 0;
  border-bottom: 5px solid #aca899;
}
.scrollbtn.down {
  margin-top: 3px;
}
.swatch {
  flex: none;
  width: 20px;
  height: 16px;
  margin-bottom: 4px;
  box-sizing: border-box;
  border: 1px solid #000;
  font: bold 12px/14px "Liberation Mono", monospace;
  text-align: center;
  color: #111;
}
.swatch.none {
  background: #fff;
  display: flex;
  align-items: center;
  justify-content: center;
}
.swatch.on {
  box-shadow: 0 0 0 3px #000;
}

/* bottom rows */
.bottom1,
.bottom2 {
  display: flex;
  align-items: center;
  box-shadow: 0 1px 0 #aca899, 0 2px 0 #fff;
}
.bottom1 {
  height: 29px;
  margin-bottom: 1px;
  border-top: 1px solid #fff;
}
.bottom2 {
  height: 27px;
  margin-bottom: 2px;
  padding-top: 1px;
  box-sizing: border-box;
}
.bottom1 .brk:first-child {
  width: 9px;
  background: linear-gradient(#fff, #fff) 3px 0 / 1px 100% no-repeat, linear-gradient(#aca899, #aca899) 4px 0 / 1px 100% no-repeat;
}
.bottom2 .brk:first-child {
  width: 7px;
  background: linear-gradient(#fff, #fff) 3px 0 / 1px 100% no-repeat, linear-gradient(#aca899, #aca899) 4px 0 / 1px 100% no-repeat;
}
.statusbar {
  flex: none;
  height: 32px;
  box-sizing: border-box;
  display: flex;
  padding-top: 2px;
}
.panel {
  flex: none;
  box-sizing: border-box;
  border-right: 1px solid #aca899;
  box-shadow: 1px 0 0 #fff;
}
.panel:last-child {
  border-right: 0;
  box-shadow: none;
}

.cursor {
  position: absolute;
  left: 96px;
  top: 93px;
}
</style>
